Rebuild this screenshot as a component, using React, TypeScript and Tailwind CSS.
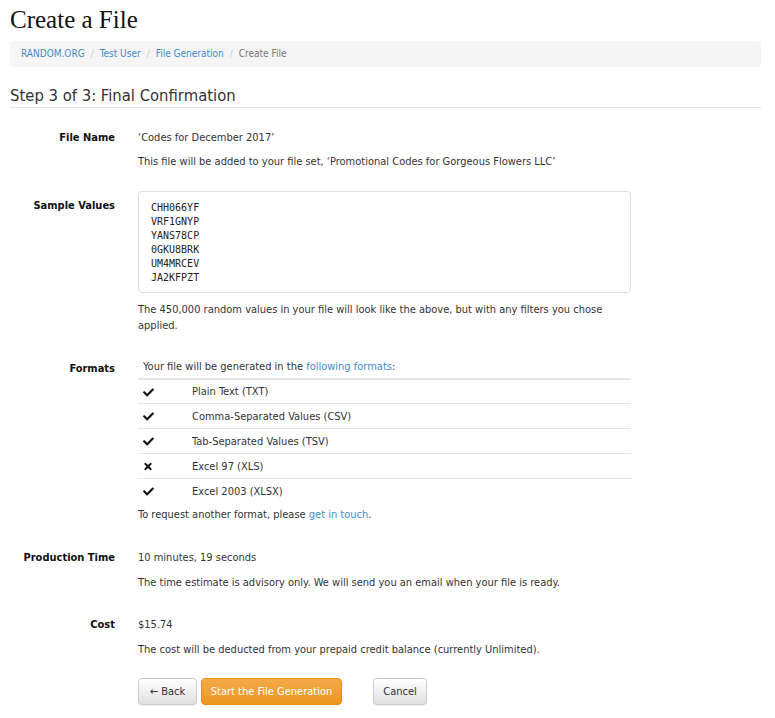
import { FaCheck, FaTimes } from "react-icons/fa";

const sans = { fontFamily: '"DejaVu Sans Condensed", "Liberation Sans", sans-serif' };

const samples = ["CHH066YF", "VRF1GNYP", "YANS78CP", "0GKU8BRK", "UM4MRCEV", "JA2KFPZT"];

const formats = [
  { ok: true, name: "Plain Text (TXT)" },
  { ok: true, name: "Comma-Separated Values (CSV)" },
  { ok: true, name: "Tab-Separated Values (TSV)" },
  { ok: false, name: "Excel 97 (XLS)" },
  { ok: true, name: "Excel 2003 (XLSX)" },
];

const Row = ({ label, labelPad = "", children, className = "" }: { label: string; labelPad?: string; children: React.ReactNode; className?: string }) => (
  <div className={`flex items-start ${className}`}>
    <div className={`w-[105px] text-right font-bold text-[#111] ${labelPad}`}>{label}</div>
    <div className="ml-[23px] w-[493px]">{children}</div>
  </div>
);

export default function App() {
  return (
    <div className="bg-white text-[#333] text-[11px] leading-[16px] pl-[10px] pb-4 w-[761px]" style={sans}>
      <h1 className="mt-[5px] text-[25px] leading-[30px] text-[#111]" style={{ fontFamily: '"Liberation Serif", serif' }}>
        Create a File
      </h1>

      <div className="mt-[6px] h-[26px] flex items-center bg-[#f5f5f5] rounded-[4px] pl-[11px] text-[10px]">
        <a className="text-[#428bca]">RANDOM.ORG</a>
        <span className="px-[6px] text-[#ccc]">/</span>
        <a className="text-[#428bca]">Test User</a>
        <span className="px-[6px] text-[#ccc]">/</span>
        <a className="text-[#428bca]">File Generation</a>
        <span className="px-[6px] text-[#ccc]">/</span>
        <span className="text-[#777]">Create File</span>
      </div>

      <h2 className="mt-[19px] text-[16.5px] leading-[20px] pb-[1px] border-b border-[#e5e5e5] text-[#333]">
        Step 3 of 3: Final Confirmation
      </h2>

      <Row label="File Name" className="mt-[22px]">
        <p>‘Codes for December 2017’</p>
        <p className="mt-[8px]">This file will be added to your file set, ‘Promotional Codes for Gorgeous Flowers LLC’</p>
      </Row>

      <Row label="Sample Values" labelPad="pt-[7px]" className="mt-[21px]">
        <div
          className="border border-[#ddd] rounded-[4px] pt-[9px] pb-[7px] px-[12px] text-[10px] leading-[14px] text-[#222]"
          style={{ fontFamily: '"DejaVu Sans Mono", "Liberation Mono", monospace' }}
        >
          {samples.map((s) => (
            <div key={s}>{s}</div>
          ))}
        </div>
        <p className="mt-[9px]">
          The 450,000 random values in your file will look like the above, but with any filters you chose applied.
        </p>
      </Row>

      <Row label="Formats" labelPad="pt-[2px]" className="mt-[25px]">
        <p className="pl-[5px]">
          Your file will be generated in the <a className="text-[#428bca]">following formats</a>:
        </p>
        <div className="mt-[3px]">
          {formats.map((f, i) => (
            <div
              key={f.name}
              className={`flex items-center h-[25px] ${i === 0 ? "border-t-2 border-[#e6e6e6]" : "border-t border-[#e6e6e6]"}`}
            >
              <div className="w-[54px] pl-[5px] pt-[1px] text-[#111]">
                {f.ok ? <FaCheck className="w-[11px] h-[11px]" /> : <FaTimes className="w-[10px] h-[11px]" />}
              </div>
              <div className="pt-[1px]">{f.name}</div>
            </div>
          ))}
        </div>
        <p className="mt-[4px]">
          To request another format, please <a className="text-[#428bca]">get in touch</a>.
        </p>
      </Row>

      <Row label="Production Time" className="mt-[27px]">
        <p>10 minutes, 19 seconds</p>
        <p className="mt-[9px]">The time estimate is advisory only. We will send you an email when your file is ready.</p>
      </Row>

      <Row label="Cost" className="mt-[26px]">
        <p>$15.74</p>
        <p className="mt-[9px]">The cost will be deducted from your prepaid credit balance (currently Unlimited).</p>
      </Row>

      <div className="mt-[20px] ml-[128px] flex items-center text-[11px]">
        <button className="h-[27px] w-[59px] rounded-[4px] border border-[#ccc] bg-gradient-to-b from-white to-[#e0e0e0] text-[#333] shadow-[0_1px_1px_rgba(0,0,0,0.08)]">
          ← Back
        </button>
        <button className="ml-[4px] h-[27px] w-[141px] rounded-[4px] border border-[#e38d13] bg-gradient-to-b from-[#f3aa48] to-[#ec961c] text-white">
          Start the File Generation
        </button>
        <button className="ml-[31px] h-[27px] w-[54px] rounded-[4px] border border-[#ccc] bg-gradient-to-b from-white to-[#e0e0e0] text-[#333] shadow-[0_1px_1px_rgba(0,0,0,0.08)]">
          Cancel
        </button>
      </div>
    </div>
  );
}
